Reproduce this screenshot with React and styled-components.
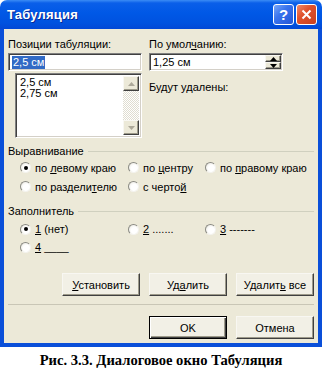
import React from 'react';
import styled, { createGlobalStyle } from 'styled-components';

const GlobalStyle = createGlobalStyle`
  html, body {
    margin: 0;
    padding: 0;
    background: #fff;
  }
  body {
    font-family: "Liberation Sans", Arial, sans-serif;
    font-size: 11px;
    color: #000;
  }
`;

const Page = styled.div`
  width: 323px;
  display: flex;
  flex-direction: column;
`;

const Window = styled.div`
  width: 322px;
  display: flex;
  flex-direction: column;
`;

const TitleBar = styled.div`
  height: 29px;
  box-sizing: border-box;
  display: flex;
  align-items: center;
  padding: 0 5px 0 7px;
  border-radius: 7px 7px 0 0;
  background: linear-gradient(
    #3b8cf5 0,
    #0a5fe9 3px,
    #0058e6 45%,
    #0052df 80%,
    #0248d6 100%
  );
`;

const Title = styled.div`
  color: #fff;
  font-weight: bold;
  font-size: 13px;
  text-shadow: 1px 1px #0b2a95;
  letter-spacing: 0.2px;
`;

const CaptionButtons = styled.div`
  margin-left: auto;
  display: flex;
  gap: 2px;
`;

const CapBtn = styled.div`
  width: 21px;
  height: 21px;
  box-sizing: border-box;
  border: 1px solid #fff;
  border-radius: 3px;
  display: flex;
  align-items: center;
  justify-content: center;
  color: #fff;
  font-weight: bold;
  font-size: 15px;
  background: ${(p) =>
    p.$close
      ? 'linear-gradient(135deg, #f08a6a 0%, #e0522d 40%, #c8401e 100%)'
      : 'linear-gradient(135deg, #7aa8f8 0%, #3a74ee 40%, #2456d6 100%)'};
`;

const Body = styled.div`
  background: #ece9d8;
  border: 4px solid #0a4fd9;
  border-top: none;
  padding: 9px 4px 4px 4px;
  display: flex;
  flex-direction: column;
`;

const TopGrid = styled.div`
  display: grid;
  grid-template-columns: 134px 134px;
  column-gap: 7px;
`;

const Column = styled.div`
  display: flex;
  flex-direction: column;
`;

const Label = styled.div`
  line-height: 13px;
  height: 13px;
  white-space: nowrap;
  margin-top: ${(p) => p.$mt || 0}px;
`;

const Key = styled.span`
  text-decoration: underline;
`;

const Sunken = styled.div`
  box-sizing: border-box;
  background: #fff;
  border: 1px solid;
  border-color: #808080 #fff #fff #808080;
  box-shadow: inset 1px 1px #404040, inset -1px -1px #d4d0c8;
`;

const TextField = styled(Sunken)`
  height: 18px;
  margin-top: 2px;
  display: flex;
  align-items: center;
  padding: 0 2px 0 3px;
  line-height: 13px;
`;

const Selected = styled.span`
  background: #316ac5;
  color: #fff;
  padding: 0 1px;
`;

const ListBox = styled(Sunken)`
  height: 65px;
  margin-top: 2px;
  margin-left: 7px;
  display: flex;
  padding: 2px;
`;

const Items = styled.div`
  flex: 1;
  padding: 1px 2px;
  line-height: 11px;
`;

const ScrollBar = styled.div`
  width: 16px;
  display: flex;
  flex-direction: column;
`;

const Track = styled.div`
  flex: 1;
  background: repeating-conic-gradient(#fff 0 25%, #e0ddd0 0 50%) 0 0 / 2px 2px;
`;

const Raised = styled.div`
  box-sizing: border-box;
  background: #ece9d8;
  border: 1px solid;
  border-color: #f8f7f2 #404040 #404040 #f8f7f2;
  box-shadow: inset -1px -1px #9d9a8a;
  display: flex;
  align-items: center;
  justify-content: center;
`;

const ArrowBtn = styled(Raised)`
  height: ${(p) => p.$h || 15}px;
  width: 100%;
`;

const SpinField = styled(TextField)`
  padding-right: 1px;
  justify-content: space-between;
`;

const Spinner = styled.div`
  width: 16px;
  height: 14px;
  display: flex;
  flex-direction: column;
`;

const GroupHeader = styled.div`
  display: flex;
  align-items: center;
  gap: 4px;
  margin-top: ${(p) => p.$mt}px;
  line-height: 13px;
  &::after {
    content: '';
    flex: 1;
    height: 1px;
    background: #d0d0bf;
  }
`;

const RadioGrid = styled.div`
  display: grid;
  grid-template-columns: 108px 77px auto;
  grid-auto-rows: ${(p) => p.$row}px;
  margin-left: 12px;
  margin-top: ${(p) => p.$mt || 0}px;
`;

const RadioItem = styled.div`
  display: flex;
  align-items: center;
  gap: 4px;
  white-space: nowrap;
`;

const Circle = styled.div`
  width: 11px;
  height: 11px;
  box-sizing: border-box;
  border-radius: 50%;
  border: 1px solid;
  border-color: #8b8b84 #f4f3ee #f4f3ee #8b8b84;
  background: radial-gradient(circle at 60% 60%, #fff 40%, #e6e4da 100%);
  display: flex;
  align-items: center;
  justify-content: center;
  &::after {
    content: '';
    width: 4px;
    height: 4px;
    border-radius: 50%;
    background: ${(p) => (p.$on ? '#000' : 'transparent')};
  }
`;

const ButtonRow = styled.div`
  display: flex;
  justify-content: flex-end;
  gap: 9px;
  margin-top: ${(p) => p.$mt}px;
`;

const PushButton = styled(Raised)`
  width: 78px;
  height: 23px;
  background: #f2f0e6;
  ${(p) =>
    p.$default &&
    `
    border-color: #000;
    box-shadow: inset 1px 1px #fff, inset -1px -1px #404040, inset -2px -2px #9d9a8a;
  `}
`;

const Separator = styled.div`
  height: 1px;
  background: #c9c6b6;
  margin-top: 8px;
`;

const FigureCaption = styled.div`
  font-family: "Liberation Serif", "Times New Roman", serif;
  font-weight: bold;
  font-size: 14.6px;
  line-height: 16px;
  text-align: center;
  width: 322px;
  margin-top: 5px;
`;

const UpArrow = ({ color = '#000' }) => (
  <svg width="7" height="4" viewBox="0 0 7 4">
    <polygon points="3.5,0 7,4 0,4" fill={color} />
  </svg>
);

const DownArrow = ({ color = '#000' }) => (
  <svg width="7" height="4" viewBox="0 0 7 4">
    <polygon points="0,0 7,0 3.5,4" fill={color} />
  </svg>
);

const Radio = ({ on, children }) => (
  <RadioItem>
    <Circle $on={on} />
    <span>{children}</span>
  </RadioItem>
);

export default function App() {
  return (
    <Page>
      <GlobalStyle />
      <Window>
        <TitleBar>
          <Title>Табуляция</Title>
          <CaptionButtons>
            <CapBtn>?</CapBtn>
            <CapBtn $close>
              <svg width="11" height="11" viewBox="0 0 11 11">
                <path d="M1.5 1.5 L9.5 9.5 M9.5 1.5 L1.5 9.5" stroke="#fff" strokeWidth="2" />
              </svg>
            </CapBtn>
          </CaptionButtons>
        </TitleBar>
        <Body>
          <TopGrid>
            <Column>
              <Label>Позиции табуляции:</Label>
              <TextField>
                <Selected>2,5 см</Selected>
              </TextField>
              <ListBox>
                <Items>
                  <div>2,5 см</div>
                  <div>2,75 см</div>
                </Items>
                <ScrollBar>
                  <ArrowBtn>
                    <UpArrow color="#aca899" />
                  </ArrowBtn>
                  <Track />
                  <ArrowBtn>
                    <DownArrow color="#aca899" />
                  </ArrowBtn>
                </ScrollBar>
              </ListBox>
            </Column>
            <Column>
              <Label>
                По умол<Key>ч</Key>анию:
              </Label>
              <SpinField>
                <span>1,25 см</span>
                <Spinner>
                  <ArrowBtn $h={7}>
                    <UpArrow />
                  </ArrowBtn>
                  <ArrowBtn $h={7}>
                    <DownArrow />
                  </ArrowBtn>
                </Spinner>
              </SpinField>
              <Label $mt={10}>Будут удалены:</Label>
            </Column>
          </TopGrid>

          <GroupHeader $mt={7}>Выравнивание</GroupHeader>
          <RadioGrid $row={19}>
            <Radio on>
              по <Key>л</Key>евому краю
            </Radio>
            <Radio>
              по <Key>ц</Key>ентру
            </Radio>
            <Radio>
              по <Key>п</Key>равому краю
            </Radio>
            <Radio>
              по раздели<Key>т</Key>елю
            </Radio>
            <Radio>
              с черто<Key>й</Key>
            </Radio>
          </RadioGrid>

          <GroupHeader $mt={9}>Заполнитель</GroupHeader>
          <RadioGrid $row={18} $mt={2}>
            <Radio on>
              <Key>1</Key> (нет)
            </Radio>
            <Radio>
              <Key>2</Key> .......
            </Radio>
            <Radio>
              <Key>3</Key> -------
            </Radio>
            <Radio>
              <Key>4</Key> ____
            </Radio>
          </RadioGrid>

          <ButtonRow $mt={17}>
            <PushButton>
              <span>
                <Key>У</Key>становить
              </span>
            </PushButton>
            <PushButton>
              <span>
                Уд<Key>а</Key>лить
              </span>
            </PushButton>
            <PushButton>
              <span>
                Удалит<Key>ь</Key> все
              </span>
            </PushButton>
          </ButtonRow>
          <Separator />
          <ButtonRow $mt={11}>
            <PushButton $default>OK</PushButton>
            <PushButton>Отмена</PushButton>
          </ButtonRow>
        </Body>
      </Window>
      <FigureCaption>Рис. 3.3. Диалоговое окно Табуляция</FigureCaption>
    </Page>
  );
}
